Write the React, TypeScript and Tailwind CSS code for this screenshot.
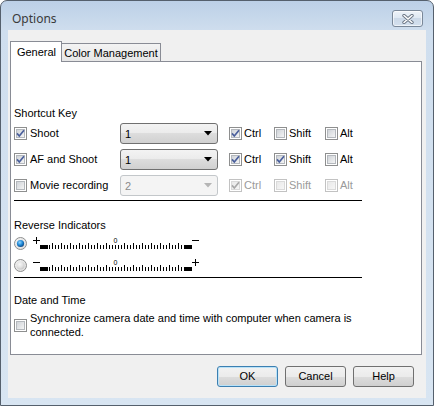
import React, { useId } from 'react';
import clsx from 'clsx';

const ui = { fontFamily: '"Liberation Sans", Arial, sans-serif' };

const Checkbox = ({ checked, disabled }: { checked?: boolean; disabled?: boolean }) => {
  const id = useId();
  return (
    <svg width="13" height="13" viewBox="0 0 13 13" className="shrink-0">
      <defs>
        <linearGradient id={id} x1="0" y1="0" x2="1" y2="1">
          <stop offset="0" stopColor={disabled ? '#e8e8e8' : '#cdd1d6'} />
          <stop offset="1" stopColor={disabled ? '#f7f7f7' : '#f7f7f7'} />
        </linearGradient>
      </defs>
      <rect x="0.5" y="0.5" width="12" height="12" fill="#fff" stroke={disabled ? '#c2c2c2' : '#8e8f8f'} />
      <rect x="2.5" y="2.5" width="8" height="8" fill={`url(#${id})`} stroke={disabled ? '#dadada' : '#b4b8bd'} />
      {checked && (
        <path
          d="M3 6.4 L5.3 9 L10 3.2"
          fill="none"
          stroke={disabled ? '#a8a8a8' : '#4a5f9c'}
          strokeWidth="1.7"
        />
      )}
    </svg>
  );
};

const Radio = ({ checked }: { checked?: boolean }) => {
  const id = useId();
  return (
    <svg width="13" height="13" viewBox="0 0 13 13" className="shrink-0">
      <defs>
        <linearGradient id={`${id}o`} x1="0" y1="0" x2="1" y2="1">
          <stop offset="0" stopColor="#f4f4f4" />
          <stop offset="1" stopColor="#dcdcdc" />
        </linearGradient>
        <radialGradient id={`${id}i`} cx="0.4" cy="0.35" r="0.7">
          <stop offset="0" stopColor={checked ? '#8fd4ff' : '#f8f8f8'} />
          <stop offset="0.55" stopColor={checked ? '#1d86d4' : '#e2e2e2'} />
          <stop offset="1" stopColor={checked ? '#0b3f78' : '#c6c6c6'} />
        </radialGradient>
      </defs>
      <circle cx="6.5" cy="6.5" r="6" fill={`url(#${id}o)`} stroke="#8e8f8f" />
      <circle cx="6.5" cy="6.5" r={checked ? 3.6 : 4} fill={`url(#${id}i)`} />
    </svg>
  );
};

const Combo = ({ value, disabled }: { value: string; disabled?: boolean }) => (
  <div
    className={clsx(
      'flex h-[21px] w-[98px] shrink-0 items-center justify-between rounded-[3px] border pl-[4px] pr-[5px] pt-[2px]',
      disabled
        ? 'border-[#c3c7ca] bg-[#f4f4f4] text-[#8a8a8a]'
        : 'border-[#707070] bg-[linear-gradient(#f3f3f3_0%,#ebebeb_50%,#dddddd_50%,#d0d0d0_100%)] text-black'
    )}
  >
    <span>{value}</span>
    <svg width="8" height="5" viewBox="0 0 8 5" className="-mt-[2px]">
      <path d="M0 0 H8 L4 4.5 Z" fill={disabled ? '#b5b5b5' : '#000'} />
    </svg>
  </div>
);

const Mod = ({ label, checked, disabled, width }: { label: string; checked?: boolean; disabled?: boolean; width: string }) => (
  <div className={clsx('flex items-center gap-[2px]', width, disabled && 'text-[#9a9a9a]')}>
    <Checkbox checked={checked} disabled={disabled} />
    <span>{label}</span>
  </div>
);

const ShortcutRow = ({
  label, value, shoot, ctrl, shift, disabled,
}: { label: string; value: string; shoot?: boolean; ctrl?: boolean; shift?: boolean; disabled?: boolean }) => (
  <div className="flex h-[21px] items-center">
    <div className="flex w-[106px] items-center gap-[3px]">
      <Checkbox checked={shoot} />
      <span>{label}</span>
    </div>
    <Combo value={value} disabled={disabled} />
    <div className="ml-[11px] flex items-center">
      <Mod label="Ctrl" checked={ctrl} disabled={disabled} width="w-[45px]" />
      <Mod label="Shift" checked={shift} disabled={disabled} width="w-[51px]" />
      <Mod label="Alt" disabled={disabled} width="w-[40px]" />
    </div>
  </div>
);

// exposure level scale, ticks every 3px with every third one taller
const Scale = ({ reversed }: { reversed?: boolean }) => {
  const ticks = Array.from({ length: 45 }, (_, i) => i);
  const plus = (cx: number) => (
    <g stroke="#000" strokeWidth="1">
      <path d={`M${cx - 3} 5.5 H${cx + 4}`} />
      <path d={`M${cx + 0.5} 2 V9`} />
    </g>
  );
  const minus = (cx: number) => <path d={`M${cx - 3} 5.5 H${cx + 4}`} stroke="#000" strokeWidth="1" />;
  return (
    <svg width="170" height="16" viewBox="0 0 170 16" className="shrink-0">
      {reversed ? minus(4) : plus(4)}
      <rect x="8" y="10" width="8" height="4" fill="#000" />
      {ticks.map((i) => {
        const x = 17.5 + i * 3;
        const top = i === 22 ? 10 : i % 3 === 1 ? 8 : 10;
        return <path key={i} d={`M${x} ${top} V14`} stroke="#000" strokeWidth="1" />;
      })}
      <text x="83.5" y="8" fontSize="7" textAnchor="middle" fontFamily="Liberation Sans, sans-serif">0</text>
      <rect x="152" y="10" width="8" height="4" fill="#000" />
      {reversed ? plus(163) : minus(163)}
    </svg>
  );
};

const Button = ({ label, primary }: { label: string; primary?: boolean }) => (
  <button
    className={clsx(
      'flex h-[21px] w-[61px] items-center justify-center rounded-[3px] border bg-[linear-gradient(#f2f2f2_0%,#ebebeb_50%,#dddddd_50%,#cfcfcf_100%)] text-black',
      primary ? 'border-[#3c7fb1] shadow-[inset_0_0_0_1px_#b9e2f8]' : 'border-[#707070]'
    )}
  >
    {label}
  </button>
);

export default function App() {
  return (
    <div className="h-[406px] w-[434px] bg-white">
      <div className="flex h-[406px] w-[434px] flex-col rounded-t-[7px] border border-[#55606d] bg-[linear-gradient(#bcd0e7_0%,#cfdeee_30px,#d8e5f2_100%)] px-[7px] pb-[7px]">
        {/* title bar */}
        <div className="flex h-[29px] shrink-0 items-start justify-between pl-[4px] pr-[3px]">
          <span className="mt-[10px] text-[12px] leading-[16px] text-[#3a3a3a]" style={{ fontFamily: '"Noto Sans", "Open Sans", sans-serif' }}>
            Options
          </span>
          <div className="mt-[9px] flex h-[17px] w-[31px] items-center justify-center rounded-[3px] border border-[#7a8899] bg-[linear-gradient(#eef3f9_0%,#dde7f2_50%,#ccd9e8_50%,#d4e0ee_100%)] shadow-[inset_0_0_0_1px_rgba(255,255,255,0.6)]">
            <svg width="12" height="10" viewBox="0 0 12 10">
              <path d="M2 1.5 L10 8.5 M10 1.5 L2 8.5" stroke="#6a7584" strokeWidth="3.4" strokeLinecap="round" />
              <path d="M2 1.5 L10 8.5 M10 1.5 L2 8.5" stroke="#fff" strokeWidth="1.6" strokeLinecap="round" />
            </svg>
          </div>
        </div>

        {/* client area */}
        <div className="flex flex-1 flex-col bg-[#f0f0f0] text-[11px] leading-[13px] text-black" style={ui}>
          <div className="ml-[2px] mt-[11px] flex h-[20px] items-end">
            <div className="relative z-10 -mb-[1px] flex h-[21px] w-[52px] items-center justify-center border border-b-0 border-[#898c95] bg-white pl-[1px]">
              General
            </div>
            <div className="flex h-[18px] w-[99px] items-center justify-center border border-b-0 border-l-0 border-[#898c95] bg-[linear-gradient(#f3f3f3,#e6e6e6)] pt-[1px]">
              Color Management
            </div>
          </div>

          <div className="ml-[2px] h-[294px] w-[412px] border border-[#898c95] bg-white pl-[3px]">
            <div className="mt-[45px]">Shortcut Key</div>
            <div className="mt-[3px] flex flex-col gap-[5px]">
              <ShortcutRow label="Shoot" value="1" shoot ctrl />
              <ShortcutRow label="AF and Shoot" value="1" shoot ctrl shift />
              <ShortcutRow label="Movie recording" value="2" ctrl disabled />
            </div>
            <div className="mt-[4px] h-px w-[348px] bg-black" />

            <div className="mt-[18px]">Reverse Indicators</div>
            <div className="mt-[3px] flex flex-col gap-[6px]">
              <div className="flex h-[16px] items-center gap-[5px]">
                <Radio checked />
                <Scale />
              </div>
              <div className="flex h-[16px] items-center gap-[5px]">
                <Radio />
                <Scale reversed />
              </div>
            </div>
            <div className="mt-[4px] h-px w-[348px] bg-black" />

            <div className="mt-[16px]">Date and Time</div>
            <div className="mt-[4px] flex items-center gap-[3px]">
              <Checkbox />
              <span className="w-[330px] leading-[14px]">
                Synchronize camera date and time with computer when camera is connected.
              </span>
            </div>
          </div>

          <div className="mt-[11px] flex justify-end gap-[7px] pr-[12px]">
            <Button label="OK" primary />
            <Button label="Cancel" />
            <Button label="Help" />
          </div>
        </div>
      </div>
    </div>
  );
}
